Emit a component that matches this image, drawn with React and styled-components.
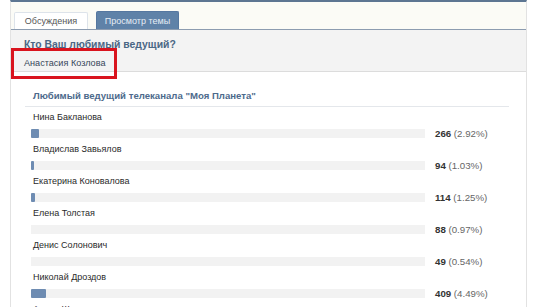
import React from 'react'
import styled, { createGlobalStyle } from 'styled-components'

const GlobalStyle = createGlobalStyle`
  html, body {
    margin: 0;
    padding: 0;
    background: #ffffff;
    overflow: hidden;
  }
  body {
    font-family: "Liberation Sans", "DejaVu Sans", sans-serif;
    font-size: 9px;
    color: #333;
  }
`

const votes = [
  { name: 'Нина Бакланова', count: 266, pct: '2.92%', fill: 8 },
  { name: 'Владислав Завьялов', count: 94, pct: '1.03%', fill: 3 },
  { name: 'Екатерина Коновалова', count: 114, pct: '1.25%', fill: 4 },
  { name: 'Елена Толстая', count: 88, pct: '0.97%', fill: 0 },
  { name: 'Денис Солонович', count: 49, pct: '0.54%', fill: 0 },
  { name: 'Николай Дроздов', count: 409, pct: '4.49%', fill: 15 },
  { name: 'Арина Шарапова', count: 72, pct: '0.79%', fill: 0 },
]

function App() {
  return (
    <>
      <GlobalStyle />
      <Page>
        <Frame>
          <TabBar>
            <Tab>Обсуждения</Tab>
            <Tab active>Просмотр темы</Tab>
          </TabBar>
          <Header>
            <Title>Кто Ваш любимый ведущий?</Title>
            <Author>Анастасия Козлова</Author>
            <Highlight />
          </Header>
          <Body>
            <PollTitle>Любимый ведущий телеканала "Моя Планета"</PollTitle>
            {votes.map(v => (
              <Row key={v.name}>
                <Name>{v.name}</Name>
                <BarLine>
                  <Track>
                    {v.fill > 0 && <Fill style={{ width: v.fill }} />}
                  </Track>
                  <Count>
                    <b>{v.count}</b> ({v.pct})
                  </Count>
                </BarLine>
              </Row>
            ))}
          </Body>
        </Frame>
      </Page>
    </>
  )
}

export default App

const Page = styled.div`
  width: 537px;
  height: 307px;
  padding-left: 10px;
  box-sizing: border-box;
  overflow: hidden;
`
const Frame = styled.div`
  width: 515px;
  border-top: 2px solid #5d7692;
  border-left: 1px solid #e2e2e2;
  border-right: 1px solid #e2e2e2;
  min-height: 340px;
`
const TabBar = styled.div`
  height: 27px;
  background: #fbfbf6;
  display: flex;
  align-items: flex-end;
  gap: 8px;
  padding-left: 3px;
`
const Tab = styled.div`
  height: ${p => (p.active ? '18px' : '17px')};
  width: ${p => (p.active ? '83px' : '74px')};
  display: flex;
  align-items: center;
  justify-content: center;
  box-sizing: border-box;
  background: ${p => (p.active ? '#5f82a8' : '#ffffff')};
  color: ${p => (p.active ? '#e6edf5' : '#555')};
  border: 1px solid ${p => (p.active ? '#5577a0' : '#dde3ea')};
  border-bottom: none;
  border-radius: 2px 2px 0 0;
  font-size: 9px;
`
const Title = styled.div`
  font-weight: bold;
  font-size: 10.4px;
  color: #4a6785;
  line-height: 13px;
`
const Header = styled.div`
  position: relative;
  height: 43px;
  background: #f3f3f3;
  border-top: 1px solid #8c9cb0;
  border-bottom: 1px solid #dcdcdc;
  padding: 8px 0 0 13px;
  box-sizing: border-box;
`
const Author = styled.div`
  margin-top: 6px;
  color: #36465a;
  font-size: 9.1px;
  line-height: 13px;
`
const Highlight = styled.div`
  position: absolute;
  left: 0;
  top: 18px;
  width: 106px;
  height: 31px;
  border: 3px solid #d9141e;
  box-sizing: border-box;
`
const Body = styled.div`
  padding: 17px 17px 0 14px;
`
const PollTitle = styled.div`
  font-weight: bold;
  font-size: 9.6px;
  color: #4d6a8c;
  line-height: 14px;
  padding: 0 0 3px 8px;
  border-bottom: 1px solid #e4e7eb;
  margin-bottom: 3px;
`
const Row = styled.div`
  padding-left: 6px;
  height: 32px;
`
const Name = styled.div`
  padding-left: 2px;
  line-height: 14px;
  color: #2a2a2a;
`
const BarLine = styled.div`
  display: flex;
  align-items: center;
  height: 18px;
`
const Track = styled.div`
  width: 394px;
  height: 9px;
  background: #f2f2f2;
  display: flex;
`
const Fill = styled.div`
  height: 9px;
  background: #6e8cb2;
  border-radius: 1px;
`
const Count = styled.div`
  margin-left: 10px;
  font-size: 9.7px;
  color: #666;
  b {
    color: #333;
  }
`
